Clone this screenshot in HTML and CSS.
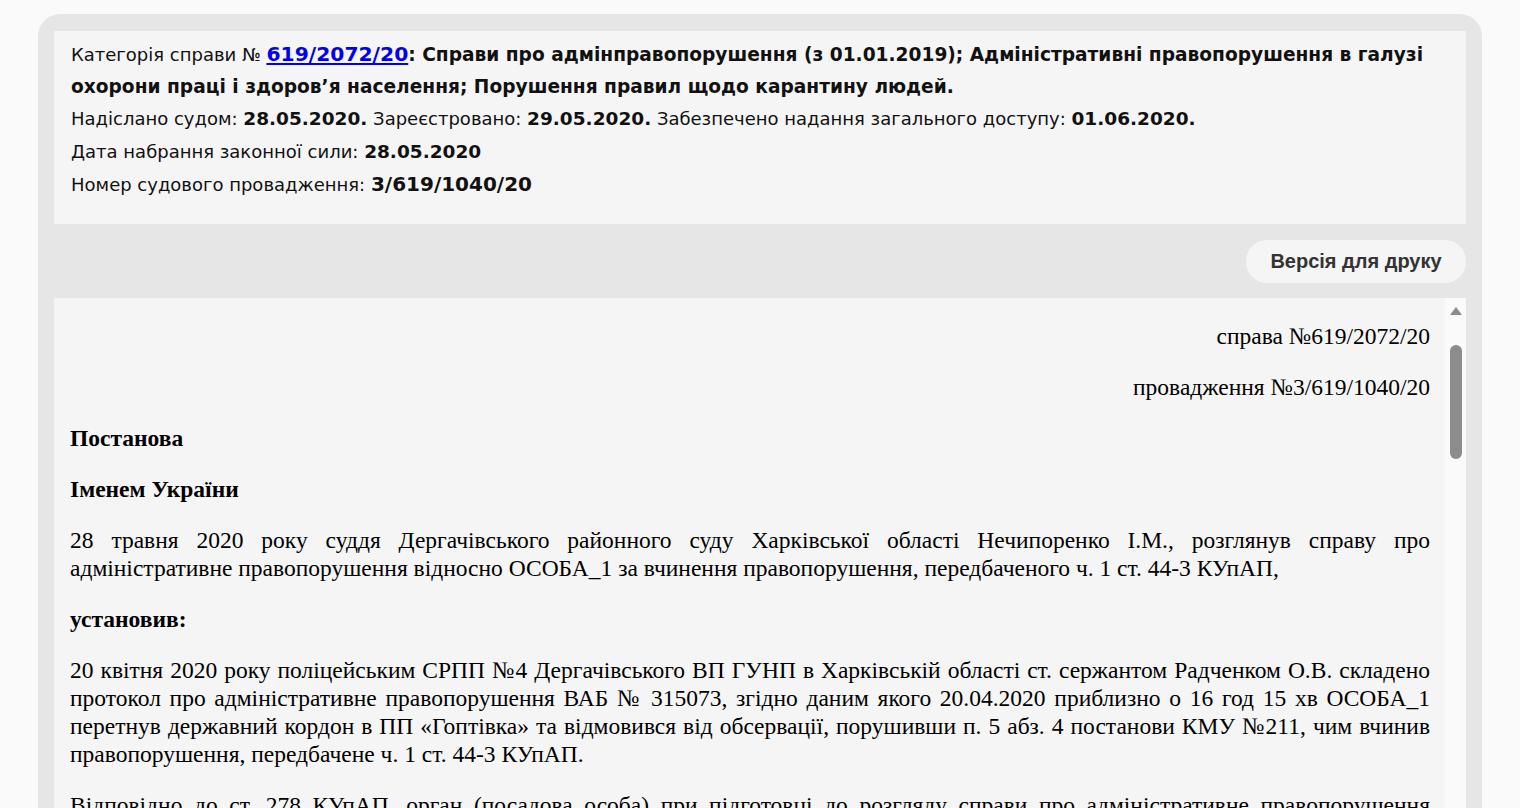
FILE: index.html
```html
<!DOCTYPE html>
<html lang="uk">
<head>
<meta charset="utf-8">
<title>Справа 619/2072/20</title>
<link rel="stylesheet" href="styles.css">
</head>
<body>
<div class="card">
  <div class="info">
    <div class="row">Категорія справи № <a class="case-link" href="#">619/2072/20</a><b class="title">: Справи про адмінправопорушення (з 01.01.2019); Адміністративні правопорушення в галузі охорони праці і здоров’я населення; Порушення правил щодо карантину людей.</b></div>
    <div class="row">Надіслано судом: <b class="date">28.05.2020.</b> Зареєстровано: <b class="date">29.05.2020.</b> Забезпечено надання загального доступу: <b class="date">01.06.2020.</b></div>
    <div class="row tall">Дата набрання законної сили: <b class="date">28.05.2020</b></div>
    <div class="row tall">Номер судового провадження: <b class="date num">3/619/1040/20</b></div>
  </div>
  <div class="toolbar">
    <button class="print-btn" type="button">Версія для друку</button>
  </div>
  <div class="doc">
    <div class="doc-text">
      <p class="right">справа №619/2072/20</p>
      <p class="right">провадження №3/619/1040/20</p>
      <p><b>Постанова</b></p>
      <p><b>Іменем України</b></p>
      <p>28 травня 2020 року суддя Дергачівського районного суду Харківської області Нечипоренко І.М., розглянув справу про адміністративне правопорушення відносно ОСОБА_1 за вчинення правопорушення, передбаченого ч. 1 ст. 44-3 КУпАП,</p>
      <p><b>установив:</b></p>
      <p>20 квітня 2020 року поліцейським СРПП №4 Дергачівського ВП ГУНП в Харківській області ст. сержантом Радченком О.В. складено протокол про адміністративне правопорушення ВАБ № 315073, згідно даним якого 20.04.2020 приблизно о 16 год 15 хв ОСОБА_1 перетнув державний кордон в ПП «Гоптівка» та відмовився від обсервації, порушивши п. 5 абз. 4 постанови КМУ №211, чим вчинив правопорушення, передбачене ч. 1 ст. 44-3 КУпАП.</p>
      <p>Відповідно до ст. 278 КУпАП, орган (посадова особа) при підготовці до розгляду справи про адміністративне правопорушення вирішує, зокрема, такі питання: чи належить до його компетенції розгляд даної справи; чи правильно складено протокол та інші матеріали справи.</p>
    </div>
    <div class="scrollbar">
      <div class="arrow"></div>
      <div class="thumb"></div>
    </div>
  </div>
</div>
</body>
</html>
```
FILE: styles.css
```css
html, body {
  margin: 0;
  padding: 0;
  height: 100%;
  overflow: hidden;
}
body {
  background: #fafafa;
  font-family: "DejaVu Sans", Verdana, sans-serif;
  color: #000;
}
.card {
  margin: 14px 38px 0 38px;
  background: #e6e6e6;
  border-radius: 22px;
  padding: 17px 16px 0 16px;
}
.info {
  background: #f5f5f5;
  padding: 8px 17px 23px 17px;
  font-size: 18px;
  line-height: 32px;
  color: #111;
}
.row {
  line-height: 32px;
}
.row.tall {
  line-height: 33px;
}
.row b,
.row a {
  line-height: 1;
}
.case-link {
  color: #0000ee;
  font-weight: bold;
  font-size: 20.3px;
}
.title {
  font-size: 18.6px;
}
.date {
  font-size: 18.5px;
}
.date.num {
  font-size: 20px;
}
.toolbar {
  display: flex;
  justify-content: flex-end;
  padding: 16px 0 15px 0;
}
.print-btn {
  font-family: "Liberation Sans", Arial, sans-serif;
  font-weight: bold;
  font-size: 20px;
  color: #333;
  background: #f5f5f5;
  border: none;
  border-radius: 21px;
  width: 220px;
  height: 43px;
  padding: 0;
}
.doc {
  display: flex;
  background: #f5f5f5;
  height: 560px;
  overflow: hidden;
}
.doc-text {
  flex: 1;
  padding: 24px 15px 0 16px;
  font-family: "Liberation Serif", "Times New Roman", serif;
  font-size: 23.5px;
  line-height: 28px;
  text-align: justify;
}
.doc-text p {
  margin: 0 0 23px 0;
}
.doc-text p.right {
  text-align: right;
}
.scrollbar {
  width: 21px;
  background: #fafafa;
  display: flex;
  flex-direction: column;
  align-items: center;
}
.arrow {
  margin-top: 9px;
  width: 0;
  height: 0;
  border-left: 6px solid transparent;
  border-right: 6px solid transparent;
  border-bottom: 8px solid #8c8c8c;
}
.thumb {
  margin-top: 30px;
  width: 12px;
  height: 114px;
  border-radius: 6px;
  background: #8c8c8c;
}
```
